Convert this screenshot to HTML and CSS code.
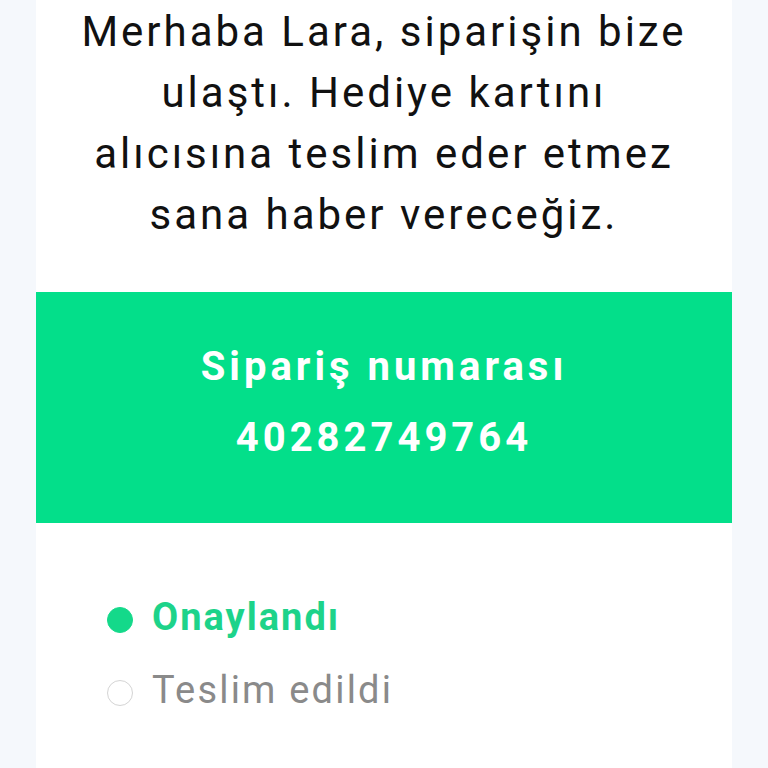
FILE: index.html
```html
<!DOCTYPE html>
<html lang="tr">
<head>
<meta charset="utf-8">
<title>Sipariş</title>
<link rel="stylesheet" href="styles.css">
</head>
<body>
<main class="card">
  <p class="message">Merhaba Lara, siparişin bize<br>ulaştı. Hediye kartını<br>alıcısına teslim eder etmez<br>sana haber vereceğiz.</p>
  <section class="order">
    <div class="order-label">Sipariş numarası</div>
    <div class="order-number">40282749764</div>
  </section>
  <ul class="steps">
    <li class="step done"><span class="dot"></span><span class="step-text">Onaylandı</span></li>
    <li class="step"><span class="dot"></span><span class="step-text">Teslim edildi</span></li>
  </ul>
</main>
</body>
</html>
```
FILE: styles.css
```css
html, body {
  margin: 0;
  padding: 0;
  background: #f5f8fc;
  font-family: Roboto, "Liberation Sans", sans-serif;
}
.card {
  width: 696px;
  margin: 0 auto;
  background: #ffffff;
  min-height: 768px;
}
.message {
  margin: 0;
  padding-top: 1px;
  font-size: 42px;
  line-height: 61px;
  letter-spacing: 3px;
  color: #111111;
  text-align: center;
}
.order {
  margin-top: 47px;
  padding: 39px 0 50px;
  background: #03df8a;
  color: #ffffff;
  font-weight: 700;
  font-size: 40px;
  line-height: 71px;
  letter-spacing: 4px;
  text-align: center;
}
.steps {
  list-style: none;
  margin: 0;
  padding: 58px 0 0 71px;
}
.step {
  display: flex;
  align-items: center;
  gap: 19px;
  height: 73px;
  line-height: 73px;
  font-size: 38px;
  letter-spacing: 2.2px;
  color: #8a8a8a;
}
.dot {
  width: 26px;
  height: 26px;
  margin-top: 4px;
  border-radius: 50%;
  border: 1.5px solid #d4d4d4;
  box-sizing: border-box;
  flex: none;
}
.step.done {
  color: #1dd38a;
  font-weight: 700;
  letter-spacing: 2px;
}
.step.done .dot {
  background: #14d98a;
  border-color: #14d98a;
}
```
